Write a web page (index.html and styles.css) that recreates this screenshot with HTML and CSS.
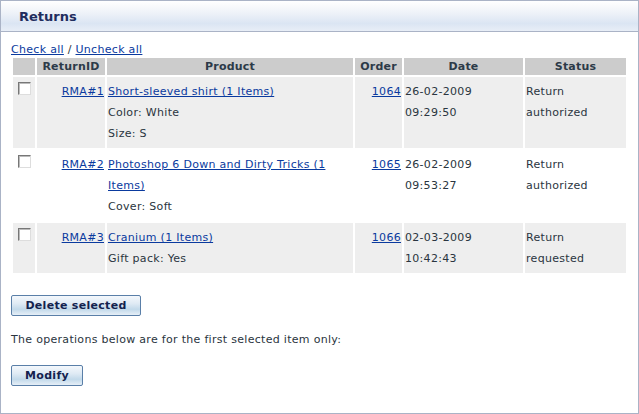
FILE: index.html
```html
<!DOCTYPE html>
<html>
<head>
<meta charset="utf-8">
<link rel="stylesheet" href="styles.css">
</head>
<body>
<div class="box">
  <div class="box-head">Returns</div>
  <div class="box-body">
    <div class="checkall"><a href="#">Check all</a> / <a href="#">Uncheck all</a></div>
    <table class="grid">
      <colgroup>
        <col class="c-cb"><col class="c-id"><col class="c-prod"><col class="c-ord"><col class="c-date"><col class="c-stat">
      </colgroup>
      <thead>
        <tr><th></th><th>ReturnID</th><th>Product</th><th>Order</th><th>Date</th><th>Status</th></tr>
      </thead>
      <tbody>
        <tr class="odd">
          <td class="cb"><span class="box-cb"></span></td>
          <td class="id"><a href="#">RMA#1</a></td>
          <td><a href="#">Short-sleeved shirt (1 Items)</a><br>Color: White<br>Size: S</td>
          <td class="id"><a href="#">1064</a></td>
          <td>26-02-2009<br>09:29:50</td>
          <td>Return<br>authorized</td>
        </tr>
        <tr class="even">
          <td class="cb"><span class="box-cb"></span></td>
          <td class="id"><a href="#">RMA#2</a></td>
          <td><a href="#">Photoshop 6 Down and Dirty Tricks (1 Items)</a><br>Cover: Soft</td>
          <td class="id"><a href="#">1065</a></td>
          <td>26-02-2009<br>09:53:27</td>
          <td>Return<br>authorized</td>
        </tr>
        <tr class="odd">
          <td class="cb"><span class="box-cb"></span></td>
          <td class="id"><a href="#">RMA#3</a></td>
          <td><a href="#">Cranium (1 Items)</a><br>Gift pack: Yes</td>
          <td class="id"><a href="#">1066</a></td>
          <td>02-03-2009<br>10:42:43</td>
          <td>Return<br>requested</td>
        </tr>
      </tbody>
    </table>
    <div class="actions"><button class="btn btn-del">Delete selected</button></div>
    <p class="note">The operations below are for the first selected item only:</p>
    <div class="actions2"><button class="btn btn-mod">Modify</button></div>
  </div>
</div>
</body>
</html>
```
FILE: styles.css
```css
html, body {
  margin: 0;
  padding: 0;
  background: #fff;
}
body {
  font-family: "DejaVu Sans", Verdana, sans-serif;
  font-size: 11px;
  letter-spacing: 0.3px;
  color: #2a3540;
}
a {
  color: #0a3a9e;
  text-decoration: underline;
}
.box {
  width: 637px;
  height: 412px;
  border: 1px solid #aab3c6;
  box-sizing: content-box;
  overflow: hidden;
}
.box-head {
  height: 30px;
  border-bottom: 1px solid #aab3c6;
  background: linear-gradient(to bottom, #ffffff 0%, #eef2f8 40%, #dbe5f3 75%, #e8eef7 100%);
  font-size: 13px;
  font-weight: bold;
  letter-spacing: 0;
  color: #1f2d5e;
  line-height: 32px;
  padding-left: 18px;
}
.box-body {
  padding: 10px 10px 0 10px;
}
.checkall {
  line-height: 16px;
  height: 16px;
}
.grid {
  border-collapse: separate;
  border-spacing: 2px;
  width: 617px;
  table-layout: fixed;
  margin-top: -2px;
}
.c-cb { width: 22px; }
.c-id { width: 68px; }
.c-prod { width: 246px; }
.c-ord { width: 47px; }
.c-date { width: 119px; }
.c-stat { width: 101px; }
.grid th {
  background: #cccccc;
  color: #2c3a48;
  font-weight: bold;
  letter-spacing: 0.2px;
  height: 17px;
  padding: 0;
  line-height: 17px;
  text-align: center;
}
.grid td {
  vertical-align: top;
  line-height: 21px;
  padding: 4px 1px 4px 1px;
}
.grid tr.odd td { background: #eeeeee; }
.grid tr.even td { background: #ffffff; }
.grid td.id { text-align: right; }
.grid td.cb { padding: 5px 0 0 5px; }
.box-cb {
  display: block;
  width: 11px;
  height: 11px;
  border: 1px solid #777;
  border-right-color: #ddd;
  border-bottom-color: #ddd;
  background: #fff;
  box-shadow: inset 1px 1px 0 #bbb;
}
.actions {
  margin-top: 20px;
}
.btn {
  font-family: "DejaVu Sans", Verdana, sans-serif;
  font-size: 11px;
  font-weight: bold;
  letter-spacing: 0.3px;
  color: #13224e;
  border: 1px solid #5a7fa8;
  border-radius: 2px;
  background: linear-gradient(to bottom, #f4f8fc 0%, #dfeaf4 40%, #c2d9ea 70%, #e6eff7 100%);
  height: 21px;
  padding: 0 10px;
  margin: 0;
  line-height: 19px;
  cursor: pointer;
}
.btn-del { width: 130px; }
.btn-mod { width: 72px; }
.note {
  margin: 13px 0 0 0;
  line-height: 21px;
}
.actions2 {
  margin-top: 15px;
}
```
